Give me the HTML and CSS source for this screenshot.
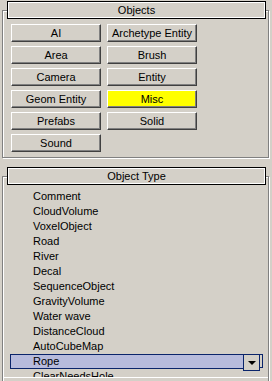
FILE: index.html
```html
<!DOCTYPE html>
<html lang="en">
<head>
    <meta charset="UTF-8">
    <title>Objects</title>
    <link rel="stylesheet" href="styles.css">
</head>
<body>
    <div class="group">
        <div class="title">Objects</div>
        <div class="buttons">
            <div class="btn">AI</div>
            <div class="btn">Archetype Entity</div>
            <div class="btn">Area</div>
            <div class="btn">Brush</div>
            <div class="btn">Camera</div>
            <div class="btn">Entity</div>
            <div class="btn">Geom Entity</div>
            <div class="btn active">Misc</div>
            <div class="btn">Prefabs</div>
            <div class="btn">Solid</div>
            <div class="btn">Sound</div>
        </div>
    </div>

    <div class="group">
        <div class="title">Object Type</div>
        <div class="list">
            <div class="item">Comment</div>
            <div class="item">CloudVolume</div>
            <div class="item">VoxelObject</div>
            <div class="item">Road</div>
            <div class="item">River</div>
            <div class="item">Decal</div>
            <div class="item">SequenceObject</div>
            <div class="item">GravityVolume</div>
            <div class="item">Water wave</div>
            <div class="item">DistanceCloud</div>
            <div class="item">AutoCubeMap</div>
            <div class="item sel">Rope<span class="drop"><span class="arrow"></span></span></div>
            <div class="item">ClearNeedsHole</div>
        </div>
    </div>
</body>
</html>
```

FILE: styles.css
```css
html, body {
    margin: 0;
    background: #d4d0c8;
}
body {
    width: 272px;
    height: 381px;
    overflow: hidden;
    font-family: "Liberation Sans", Arial, sans-serif;
    font-size: 11px;
    color: #000;
}
.group {
    margin: 10px 3px 0 2px;
    border: 1px solid #808080;
    box-shadow: 1px 1px 0 #fff, inset 1px 1px 0 #fff;
    padding-bottom: 5px;
}
.group + .group {
    margin-top: 18px;
}
.title {
    margin: -10px 2px 0 4px;
    height: 18px;
    box-sizing: border-box;
    border: 1px solid #000;
    box-shadow: inset 1px 1px 0 #fff, inset -1px -1px 0 #fff;
    background: #d4d0c8;
    text-align: center;
    line-height: 16px;
}
.buttons {
    display: grid;
    grid-template-columns: 90px 90px;
    grid-auto-rows: 18px;
    gap: 4px 6px;
    margin: 5px 0 0 8px;
}
.btn {
    box-sizing: border-box;
    border: 1px solid;
    border-color: #fff #404040 #404040 #fff;
    box-shadow: inset -1px -1px 0 #808080;
    text-align: center;
    line-height: 16px;
    white-space: nowrap;
}
.btn.active {
    background: #ffff00;
}
.list {
    margin-top: 4px;
    height: 188px;
    overflow: hidden;
    border-bottom: 1px solid #fff;
}
.item {
    height: 15px;
    line-height: 15px;
    margin-left: 7px;
    width: 249px;
    padding-left: 23px;
    box-sizing: border-box;
    white-space: nowrap;
}
.item.sel {
    position: relative;
    background: #b7bbdc;
    border: 1px solid #0a246a;
    padding-left: 22px;
    line-height: 13px;
}
.item.sel::after {
    content: "";
    position: absolute;
    right: -5px;
    top: -1px;
    width: 3px;
    height: 12px;
    border: 1px solid #0a246a;
    border-left: 0;
}
.drop {
    position: absolute;
    right: -2px;
    top: -1px;
    width: 17px;
    height: 17px;
    box-sizing: border-box;
    border: 1px solid #0a246a;
    background: #d4d0c8;
    display: flex;
    align-items: center;
    justify-content: center;
    z-index: 1;
}
.arrow {
    width: 0;
    height: 0;
    border-left: 4px solid transparent;
    border-right: 4px solid transparent;
    border-top: 4px solid #000;
    margin-top: 1px;
}
```
